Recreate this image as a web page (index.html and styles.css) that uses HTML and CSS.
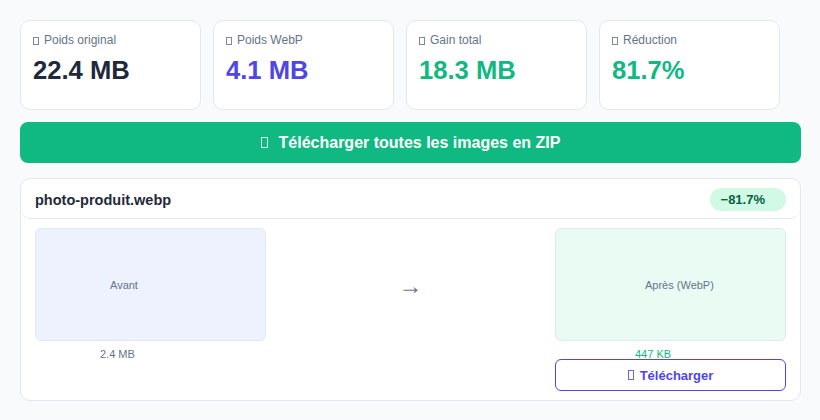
FILE: index.html
```html
<!DOCTYPE html>
<html lang="fr">
<head>
<meta charset="utf-8">
<title>Conversion WebP</title>
<link rel="stylesheet" href="styles.css">
</head>
<body>
  <div class="stats">
    <div class="stat">
      <div class="label"><span class="tofu"></span>Poids original</div>
      <div class="value dark">22.4 MB</div>
    </div>
    <div class="stat">
      <div class="label"><span class="tofu"></span>Poids WebP</div>
      <div class="value indigo">4.1 MB</div>
    </div>
    <div class="stat">
      <div class="label"><span class="tofu"></span>Gain total</div>
      <div class="value green">18.3 MB</div>
    </div>
    <div class="stat">
      <div class="label"><span class="tofu"></span>Réduction</div>
      <div class="value green">81.7%</div>
    </div>
  </div>

  <button class="zip-btn"><span class="tofu tofu-lg"></span>Télécharger toutes les images en ZIP</button>

  <div class="file-card">
    <div class="file-head">
      <span class="file-name">photo-produit.webp</span>
      <span class="badge">−81.7%</span>
    </div>
    <div class="file-body">
      <div class="col">
        <div class="preview before"><span class="before-text">Avant</span></div>
        <div class="caption before-cap">2.4 MB</div>
      </div>
      <div class="arrow">→</div>
      <div class="col">
        <div class="preview after"><span class="after-text">Après (WebP)</span></div>
        <div class="caption after-cap">447 KB</div>
        <button class="dl-btn"><span class="tofu tofu-md"></span>Télécharger</button>
      </div>
    </div>
  </div>
</body>
</html>
```

FILE: styles.css
```css
* { box-sizing: border-box; }

body {
  margin: 0;
  padding: 20px 19px 20px 20px;
  background: #f8fafc;
  font-family: "Liberation Sans", Arial, sans-serif;
  color: #1e293b;
}

.stats {
  display: grid;
  grid-template-columns: repeat(4, 180.5px);
  gap: 12.5px;
}

.stat {
  height: 90px;
  padding: 12px;
  background: #fff;
  border: 1px solid #e2e8f0;
  border-radius: 10px;
}

.label {
  font-size: 12px;
  line-height: 15px;
  color: #64748b;
  display: flex;
  align-items: center;
}

.tofu {
  display: inline-block;
  width: 6px;
  height: 8px;
  border: 1px solid currentColor;
  margin-right: 5px;
  flex: none;
  opacity: 0.85;
}

.tofu-lg {
  width: 7px;
  height: 11px;
  margin-right: 11px;
}

.tofu-md {
  width: 6px;
  height: 10px;
  margin-right: 6px;
}

.value {
  margin-top: 7px;
  font-size: 25.6px;
  line-height: 30px;
  font-weight: 700;
}

.dark { color: #1e293b; }
.indigo { color: #4f46e5; }
.green { color: #10b981; }

.zip-btn {
  margin-top: 12px;
  width: 100%;
  height: 41px;
  border: none;
  border-radius: 8px;
  background: #10b981;
  color: #fff;
  font-family: inherit;
  font-size: 16px;
  font-weight: 700;
  display: flex;
  align-items: center;
  justify-content: center;
}

.file-card {
  margin-top: 15px;
  background: #fff;
  border: 1px solid #e2e8f0;
  border-radius: 10px;
}

.file-head {
  display: flex;
  align-items: center;
  justify-content: space-between;
  padding: 9px 14px 7px;
  border-bottom: 1px solid #e2e8f0;
  border-radius: 10px;
}

.file-name {
  font-size: 14.5px;
  font-weight: 700;
  color: #1e293b;
}

.badge {
  height: 23px;
  line-height: 23px;
  padding: 0 21px 0 11px;
  border-radius: 999px;
  background: #d1fae5;
  color: #065f46;
  font-size: 13px;
  font-weight: 700;
}

.file-body {
  display: grid;
  grid-template-columns: 231px 1fr 231px;
  padding: 9px 14px 9px;
}

.col {
  display: flex;
  flex-direction: column;
}

.preview {
  height: 113px;
  border: 1px solid #e2e8f0;
  border-radius: 6px;
  display: flex;
  align-items: center;
  font-size: 11px;
  color: #64748b;
}

.before { background: #eef2ff; }
.after { background: #eafbf3; }

.before-text { padding-left: 74px; }
.after-text { padding-left: 89px; }

.caption {
  margin-top: 7px;
  font-size: 11px;
  line-height: 13px;
}

.before-cap { color: #64748b; padding-left: 65px; }
.after-cap { color: #10b981; padding-left: 80px; }

.arrow {
  height: 113px;
  display: flex;
  align-items: center;
  justify-content: center;
  font-size: 24px;
  color: #64748b;
  padding-top: 3px;
}

.dl-btn {
  margin-top: -2px;
  height: 32px;
  width: 100%;
  background: #fff;
  border: 1px solid #4f46e5;
  border-radius: 6px;
  color: #4f46e5;
  font-family: inherit;
  font-size: 13px;
  font-weight: 700;
  display: flex;
  align-items: center;
  justify-content: center;
}
```
